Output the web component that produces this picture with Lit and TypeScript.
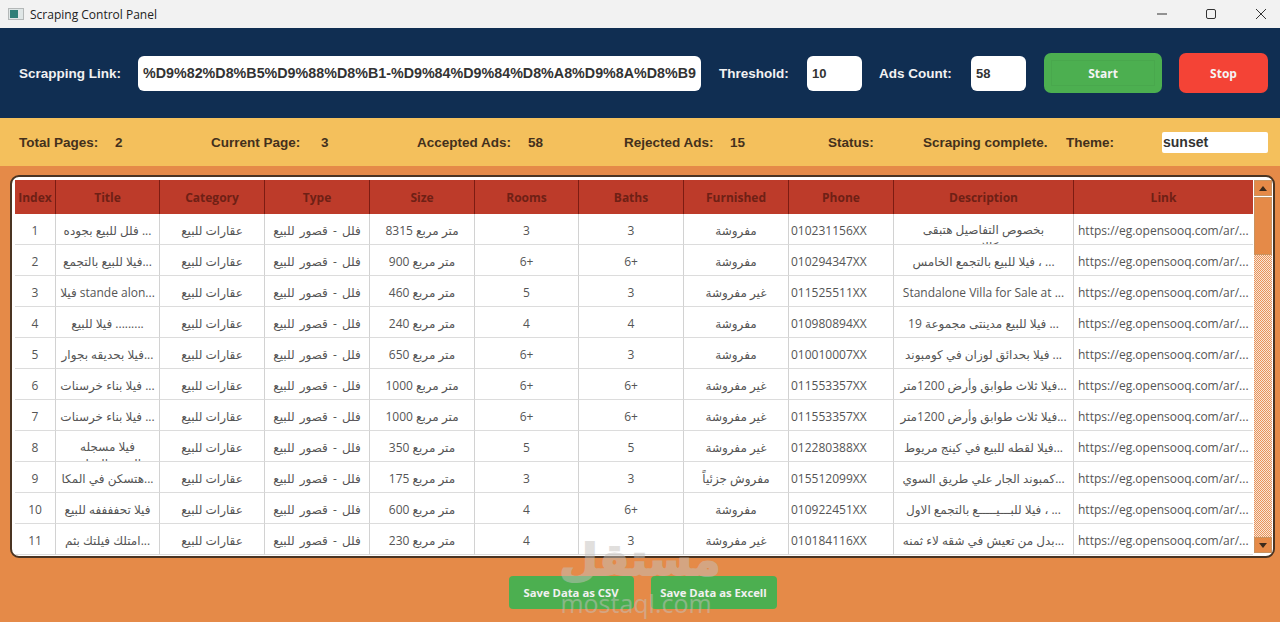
import { LitElement, html, css } from "lit";
import { customElement } from "lit/decorators.js";

type Row = { t: string; tw?: string; s: string; r: string; b: string; f: string; p: string; d: string; dw?: string };
const F = "مفروشة";
const G = "غير مفروشة";
const rows: Row[] = [
  { t: "فلل للبيع بجوده ...", s: "8315", r: "3", b: "3", f: F, p: "010231156XX", d: "بخصوص التفاصيل هتبقى", dw: "كالاتي" },
  { t: "فيلا للبيع بالتجمع...", s: "900", r: "6+", b: "6+", f: F, p: "010294347XX", d: "فيلا للبيع بالتجمع الخامس ، ..." },
  { t: "فيلا stande alon...", s: "460", r: "5", b: "3", f: G, p: "011525511XX", d: "Standalone Villa for Sale at ..." },
  { t: "فيلا للبيع .........", s: "240", r: "4", b: "4", f: F, p: "010980894XX", d: "فيلا للبيع مدينتى مجموعة 19 ..." },
  { t: "فيلا بحديقه بجوار...", s: "650", r: "6+", b: "3", f: F, p: "010010007XX", d: "فيلا بحدائق لوزان في كومبوند ..." },
  { t: "فيلا بناء خرسنات ...", s: "1000", r: "6+", b: "6+", f: G, p: "011553357XX", d: "فيلا ثلاث طوابق وأرض 1200متر..." },
  { t: "فيلا بناء خرسنات ...", s: "1000", r: "6+", b: "6+", f: G, p: "011553357XX", d: "فيلا ثلاث طوابق وأرض 1200متر..." },
  { t: "فيلا مسجله", tw: "بالشهر العقاري", s: "350", r: "5", b: "5", f: G, p: "012280388XX", d: "فيلا لقطه للبيع في كينج مريوط..." },
  { t: "هتسكن في المكا...", s: "175", r: "3", b: "3", f: "مفروش جزئياً", p: "015512099XX", d: "كمبوند الجار علي طريق السوي..." },
  { t: "فيلا تحففففه للبيع", s: "600", r: "4", b: "6+", f: F, p: "010922451XX", d: "فيلا للبـــيـــــع بالتجمع الاول ، ..." },
  { t: "امتلك فيلتك بثم...", s: "230", r: "4", b: "3", f: G, p: "010184116XX", d: "بدل من تعيش في شقه لاء ثمنه..." },
];
const heads = ["Index", "Title", "Category", "Type", "Size", "Rooms", "Baths", "Furnished", "Phone", "Description", "Link"];
const stats = ["Total Pages:", "2", "Current Page:", "3", "Accepted Ads:", "58", "Rejected Ads:", "15", "Status:", "Scraping complete.", "Theme:"];

@customElement("app-root")
export class AppRoot extends LitElement {
  static styles = css`
    :host { display: block; width: 1280px; height: 622px; overflow: hidden; position: relative; background: #e58a48; font-family: "Liberation Sans", Arial, sans-serif; }
    .titlebar { height: 28px; background: #f2f2f2; display: flex; align-items: center; padding-left: 8px; font: 12px "Open Sans", sans-serif; color: #222; box-sizing: border-box; }
    .titlebar .ttl { margin-left: 6px; flex: 1; }
    .ctl { width: 49px; height: 28px; display: flex; align-items: center; justify-content: center; box-sizing: border-box; }
    .ctl:last-child { width: 44.5px; padding-left: 7px; }
    .ctl svg { display: block; }
    .nav { height: 90px; background: #102e52; display: flex; align-items: center; padding-left: 19px; color: #f2f2f2; font-weight: 700; font-size: 13.5px; box-sizing: border-box; }
    .nav .lab { flex: none; }
    .link-w { width: 102px; }
    .field { flex: none; height: 35px; background: #fff; border-radius: 6px; box-sizing: border-box; padding-left: 5px; display: flex; align-items: center; color: #333; font-weight: 700; font-size: 13px; overflow: hidden; white-space: nowrap; }
    .url { width: 563px; margin-left: 17px; font-size: 14.3px; }
    .thr-l { width: 70px; margin-left: 18px; }
    .thr { width: 55px; margin-left: 18px; }
    .ads-l { width: 75px; margin-left: 17px; }
    .ads { width: 55px; margin-left: 17px; }
    .btn { flex: none; height: 40px; border-radius: 7px; display: flex; align-items: center; justify-content: center; color: #f4f4f4; font: 700 12px "Open Sans", sans-serif; box-sizing: border-box; }
    .start { width: 118px; background: #4caf50; margin-left: 18px; position: relative; }
    .start::after { content: ""; position: absolute; inset: 7px 7px; border: 1px solid #49a84d; }
    .stop { width: 89px; background: #f44336; margin-left: 17px; }
    .stats { height: 48px; background: #f4c05c; display: grid; grid-template-columns: 96px 96px 110px 96px 111px 96px 106px 98px 95px 143px 96px 106px; align-items: center; padding-left: 19px; box-sizing: border-box; color: #43301c; font-weight: 700; font-size: 13.5px; white-space: nowrap; }
    .theme { height: 21px; width: 106px; background: #fff; border-radius: 2px; padding-left: 1px; font-size: 14px; color: #333; line-height: 21px; box-sizing: border-box; }
    .main { padding: 9px 5px 0 10px; }
    .frame { height: 383px; box-sizing: border-box; border: 2px solid #4a3422; border-radius: 9px; background: #fff; padding: 3px 3px 0 3px; display: flex; gap: 1px; overflow: hidden; }
    .tbl { width: 1238px; flex: none; }
    .r { display: grid; grid-template-columns: 41px 104px 105px 105px 105px 104px 105px 105px 105px 180px 179px; }
    .hd { height: 34px; background: #bd3b2a; }
    .hd div { display: flex; align-items: center; justify-content: center; font: 700 12px "Open Sans", sans-serif; color: #6e2015; border-right: 1px solid #7c1c12; box-sizing: border-box; }
    .hd div:last-child { border-right: 0; }
    .bd { height: 31px; }
    .bd > div { box-sizing: border-box; border-right: 1px solid #d2d2d2; border-bottom: 1px solid #dcdcdc; padding-top: 2px; font: 12px "Open Sans", "DejaVu Sans", sans-serif; color: #555; display: flex; align-items: center; justify-content: center; overflow: hidden; white-space: nowrap; direction: ltr; }
    .bd > div:last-child { border-right: 0; }
    .bd > .left { justify-content: flex-start; padding-left: 2px; }
    .bd > .link { justify-content: flex-start; padding-left: 4px; }
    .bd > .type { word-spacing: 2px; }
    .bd > .wrap { flex-direction: column; justify-content: flex-start; padding-top: 7px; line-height: 17px; }
    .sb { width: 18px; flex: none; display: flex; flex-direction: column; }
    .sbb { height: 16px; background: #e58a48; border: 1px solid #c9925f; box-sizing: border-box; display: flex; align-items: center; justify-content: center; }
    .thumb { height: 58px; background: #e58a48; border: 1px solid #c9925f; box-sizing: border-box; margin-top: 1px; }
    .track { flex: none; height: 282px; background: repeating-conic-gradient(#e9935a 0 25%, #f8e6d8 0 50%) 0 0 / 2px 2px; }
    .saves { display: flex; justify-content: center; gap: 17px; margin-top: 18px; }
    .save { height: 33px; width: 125px; background: #4caf50; border-radius: 4px; display: flex; align-items: center; justify-content: center; color: #f1f1f1; font: 700 11.3px "Open Sans", sans-serif; white-space: nowrap; }
    .save:last-child { width: 126px; }
    .wm { position: absolute; left: 540px; top: 530px; width: 200px; text-align: center; color: #c4c0bc; opacity: 0.5; pointer-events: none; }
    .wm .a { font: 700 44px/60px "DejaVu Sans", sans-serif; -webkit-text-stroke: 2px #c4c0bc; }
    .wm .b { font: 400 25px/26px "Open Sans", sans-serif; margin-left: -8px; }
  `;

  render() {
    return html`
      <div class="titlebar">
        <svg width="16" height="14" viewBox="0 0 16 14"><rect x=".5" y="1.5" width="15" height="11" fill="#dfe6e6" stroke="#b4b8b8"/><rect x="2" y="3" width="8" height="8" fill="#2f7f78"/></svg>
        <span class="ttl">Scraping Control Panel</span>
        <span class="ctl"><svg width="12" height="12" viewBox="0 0 12 12"><path d="M1 6h10" stroke="#333" fill="none"/></svg></span>
        <span class="ctl"><svg width="12" height="12" viewBox="0 0 12 12"><rect x="1.5" y="1.5" width="9" height="9" rx="1.5" stroke="#333" fill="none"/></svg></span>
        <span class="ctl"><svg width="12" height="12" viewBox="0 0 12 12"><path d="M1 1l10 10M11 1L1 11" stroke="#333" fill="none"/></svg></span>
      </div>
      <div class="nav">
        <span class="lab link-w">Scrapping Link:</span>
        <div class="field url">%D9%82%D8%B5%D9%88%D8%B1-%D9%84%D9%84%D8%A8%D9%8A%D8%B9</div>
        <span class="lab thr-l">Threshold:</span>
        <div class="field thr">10</div>
        <span class="lab ads-l">Ads Count:</span>
        <div class="field ads">58</div>
        <div class="btn start">Start</div>
        <div class="btn stop">Stop</div>
      </div>
      <div class="stats">
        ${stats.map((s) => html`<span>${s}</span>`)}
        <div class="theme">sunset</div>
      </div>
      <div class="main">
        <div class="frame">
          <div class="tbl">
            <div class="r hd">${heads.map((h) => html`<div>${h}</div>`)}</div>
            ${rows.map((r, i) => html`
              <div class="r bd">
                <div>${i + 1}</div>
                ${r.tw ? html`<div class="wrap"><span>${r.t}</span><span>${r.tw}</span></div>` : html`<div>${r.t}</div>`}
                <div>عقارات للبيع</div>
                <div class="type">فلل - قصور للبيع</div>
                <div>${r.s} متر مربع</div>
                <div>${r.r}</div>
                <div>${r.b}</div>
                <div>${r.f}</div>
                <div class="left">${r.p}</div>
                ${r.dw ? html`<div class="wrap"><span>${r.d}</span><span>${r.dw}</span></div>` : html`<div>${r.d}</div>`}
                <div class="link">https://eg.opensooq.com/ar/...</div>
              </div>`)}
          </div>
          <div class="sb">
            <div class="sbb"><svg width="8" height="5" viewBox="0 0 8 5"><path d="M0 5L4 0l4 5z" fill="#3a2a1c"/></svg></div>
            <div class="thumb"></div>
            <div class="track"></div>
            <div class="sbb"><svg width="8" height="5" viewBox="0 0 8 5"><path d="M0 0l4 5 4-5z" fill="#3a2a1c"/></svg></div>
          </div>
        </div>
        <div class="saves">
          <div class="save">Save Data as CSV</div>
          <div class="save">Save Data as Excell</div>
        </div>
      </div>
      <div class="wm"><div class="a">مستقل</div><div class="b">mostaql.com</div></div>
    `;
  }
}
